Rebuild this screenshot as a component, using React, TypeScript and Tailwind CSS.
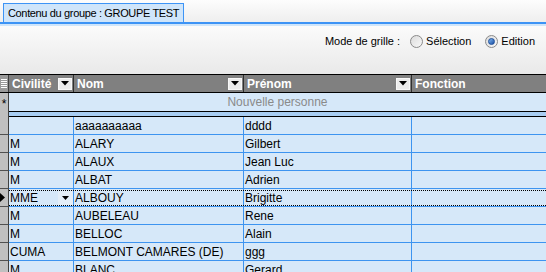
import React from "react";

const rows: [string, string, string][] = [
  ["", "aaaaaaaaaa", "dddd"],
  ["M", "ALARY", "Gilbert"],
  ["M", "ALAUX", "Jean Luc"],
  ["M", "ALBAT", "Adrien"],
  ["MME", "ALBOUY", "Brigitte"],
  ["M", "AUBELEAU", "Rene"],
  ["M", "BELLOC", "Alain"],
  ["CUMA", "BELMONT CAMARES (DE)", "ggg"],
  ["M", "BLANC", "Gerard"],
];

function DropBtn() {
  return (
    <div className="w-[14px] h-[12px] bg-[#ececec] border border-[#f8f8f8] flex items-center justify-center mr-[1px]">
      <svg width="8" height="5" viewBox="0 0 8 5">
        <path d="M0 0H8L4 4.5Z" fill="#000" />
      </svg>
    </div>
  );
}

function Radio({ checked }: { checked?: boolean }) {
  return (
    <div className="w-[13px] h-[13px] rounded-full border border-[#8a8a8a] bg-gradient-to-br from-[#dcdcdc] to-[#f8f8f8] flex items-center justify-center">
      {checked && (
        <div className="w-[7px] h-[7px] rounded-full bg-gradient-to-br from-[#7fb6f0] to-[#1c4fa3] border border-[#1d4e9a]" />
      )}
    </div>
  );
}

export default function App() {
  return (
    <div
      className="w-[546px] h-[272px] overflow-hidden bg-white text-[11px] text-black"
      style={{ fontFamily: '"Liberation Sans", Arial, sans-serif' }}
    >
      {/* tab strip */}
      <div className="h-[22px] bg-gradient-to-b from-[#fdfdfd] to-[#eeeeee] flex items-end pl-[3px]">
        <div className="h-[19px] w-[181px] bg-[#cfe5fa] border border-b-0 border-[#3d94f6] flex items-center pl-[4px] text-[11px] tracking-[-0.35px] leading-none whitespace-nowrap">
          Contenu du groupe : GROUPE TEST
        </div>
      </div>
      <div className="h-[2px] bg-[#3c93f5]" />
      <div className="h-[2px] bg-[#cfe5fa]" />
      {/* toolbar */}
      <div className="h-[48px] bg-gradient-to-b from-[#fbfbfb] to-[#e9e9e9] flex justify-end items-start pt-[8px] pr-[11px]">
        <div className="flex items-center h-[14px] text-[11px] whitespace-nowrap">
          <span className="mr-[10px]">Mode de grille :</span>
          <Radio />
          <span className="ml-[3px] mr-[14px]">Sélection</span>
          <Radio checked />
          <span className="ml-[3px]">Edition</span>
        </div>
      </div>
      {/* header */}
      <div className="h-[19px] flex bg-[#808080] border-t border-b border-black text-white font-bold text-[12px]">
        <div className="w-[9px] border-r border-[#404040] bg-[#9a9a9a] flex flex-col justify-center items-center gap-[1px]">
          <div className="w-[6px] h-[1px] bg-white" />
          <div className="w-[6px] h-[1px] bg-white" />
          <div className="w-[6px] h-[1px] bg-white" />
          <div className="w-[6px] h-[1px] bg-white" />
          <div className="w-[6px] h-[1px] bg-white" />
        </div>
        <div className="w-[65px] border-r border-[#303030] flex items-center justify-between pl-[3px]">
          <span>Civilité</span>
          <DropBtn />
        </div>
        <div className="w-[170px] border-r border-[#303030] flex items-center justify-between pl-[3px]">
          <span>Nom</span>
          <DropBtn />
        </div>
        <div className="w-[168px] border-r border-[#303030] flex items-center justify-between pl-[3px]">
          <span>Prénom</span>
          <DropBtn />
        </div>
        <div className="flex-1 flex items-center pl-[3px]">
          <span>Fonction</span>
        </div>
      </div>
      {/* new row */}
      <div className="flex h-[24px]">
        <div className="w-[9px] bg-[#c0c0c0] border-r border-[#404040] flex flex-col">
          <div className="h-[18px] flex items-center justify-center text-[12px] leading-none pt-[3px]">*</div>
        </div>
        <div className="flex-1 flex flex-col">
          <div className="h-[18px] bg-[#d6e8f9] flex items-center justify-center text-[#8a8a8a] text-[12px]">
            Nouvelle personne
          </div>
          <div className="h-[6px] bg-[#a8cdf2] border-t border-b border-black" />
        </div>
      </div>
      {/* rows */}
      {rows.map((r, i) => {
        const sel = i === 4;
        return (
          <div key={i} className="flex h-[18px]">
            <div className="w-[9px] bg-[#c0c0c0] border-r border-[#404040] border-b border-b-[#505050] flex items-center">
              {sel && (
                <svg width="6" height="9" viewBox="0 0 6 9">
                  <path d="M0 0L5 4.5L0 9Z" fill="#000" />
                </svg>
              )}
            </div>
            <div className="flex-1 flex bg-[#d6e8f9] border-b border-[#3d94f0] relative">
              {sel && (
                <>
                  <div className="absolute left-0 right-0 top-[1px] border-t border-dotted border-black" />
                  <div className="absolute left-0 right-0 bottom-0 border-t border-dotted border-black" />
                </>
              )}
              <div className="w-[65px] border-r border-[#3d94f0] flex items-center justify-between pl-[1px] text-[12px]">
                <span>{r[0]}</span>
                {sel && (
                  <div className="w-[15px] h-[14px] bg-[#e4eef8] flex items-center justify-center">
                    <svg width="7" height="4" viewBox="0 0 7 4">
                      <path d="M0 0H7L3.5 4Z" fill="#000" />
                    </svg>
                  </div>
                )}
              </div>
              <div className="w-[170px] border-r border-[#3d94f0] flex items-center pl-[1px] text-[12px] whitespace-nowrap">
                {r[1]}
              </div>
              <div className="w-[168px] border-r border-[#3d94f0] flex items-center pl-[1px] text-[12px] whitespace-nowrap">
                {r[2]}
              </div>
              <div className="flex-1" />
            </div>
          </div>
        );
      })}
    </div>
  );
}
